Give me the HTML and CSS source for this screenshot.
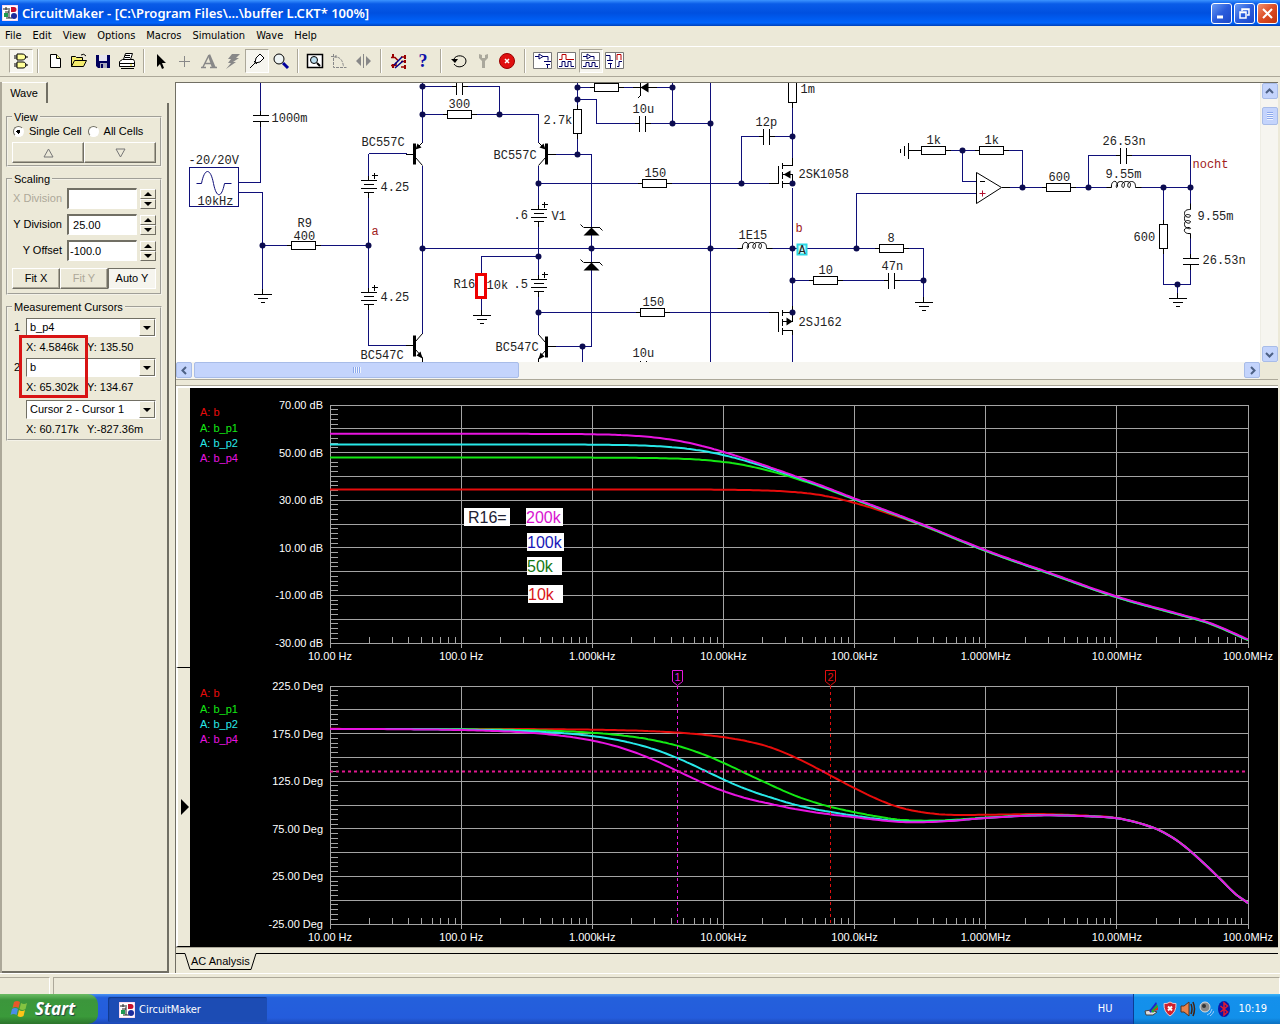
FILE: index.html
```
<!DOCTYPE html>
<html lang="en">
<head>
    <meta charset="utf-8">
    <meta name="viewport" content="width=device-width, initial-scale=1">
    <title>CircuitMaker</title>
    <link rel="stylesheet" href="styles.css">
</head>
<body>
    <!-- shared symbols -->
    <svg class="defs" width="0" height="0" aria-hidden="true">
        <defs>
            <symbol id="app-logo" viewBox="0 0 16 16">
                <rect width="16" height="16" fill="#fff" stroke="#f6b8e0"/>
                <path d="M1 4h7M4 2v3M7 5v8M4 13h6M3 7h4" stroke="#222" fill="none"/>
                <path d="M9 2h3a2.500 2.500 0 0 1 0 5H9z" fill="#c8102e"/>
                <path d="M2 8h4v4H2z" fill="#1d9a52"/>
                <circle cx="12" cy="11" r="3" fill="#1c2c9c"/>
            </symbol>
            <g id="res-h">
                <path class="part" d="M-17 0H17"/>
                <path class="part body" d="M-12-4H12V4H-12Z"/>
            </g>
            <g id="res-v">
                <path class="part" d="M0-17V17"/>
                <path class="part body" d="M-4-12H4V12H-4Z"/>
            </g>
            <g id="cap-h">
                <path class="part" d="M-8 0H8"/>
                <rect x="-3" y="-2" width="6" height="4" fill="#fff"/>
                <path class="part" d="M-3-8V8M3-8V8"/>
            </g>
            <g id="cap-v">
                <path class="part" d="M0-8V8"/>
                <rect x="-2" y="-3" width="4" height="6" fill="#fff"/>
                <path class="part" d="M-8-3H8M-8 3H8"/>
            </g>
            <g id="gnd">
                <path class="part" d="M0-6V0M-9 0H9M-5 4H5M-2 8H2"/>
            </g>
            <g id="bat">
                <rect x="-2" y="0" width="4" height="12" fill="#fff"/>
                <path class="part" d="M0-5V0M-8 0H8M-5 4H5M-8 8H8M-5 12H5M0 12V17M3-5H9M6-8V-2"/>
            </g>
            <g id="coil-h">
                <path class="thin" d="M-17 0H-12C-13-8-5-8-6-1C-8 3-8-6-3-6C1-6 2-3 0 0C-3 0-2-6 3-6C7-6 8-3 6 0C3 0 4-6 8-6C12-6 12-2 12 0H18"/>
            </g>
            <g id="zener">
                <path class="part" d="M-8 0H8"/>
                <path class="thin" d="M-11-3L-8 0M8 0L11 3"/>
                <path d="M0 0L-8 8H8Z" fill="#000"/>
            </g>
            <g id="pnp">
                <path class="part" d="M-1 11H-9"/>
                <path class="bar" d="M0 0V21"/>
                <path class="thin" d="M1 6L8-1M1 14L8 22"/>
                <path d="M1 6L3 0L7 4Z" fill="#000"/>
            </g>
            <g id="npn">
                <path class="part" d="M-1 10H-9"/>
                <path class="bar" d="M0 0V21"/>
                <path class="thin" d="M1 6L8-2M1 14L8 22V28"/>
                <path d="M8 23L2 20L6 16Z" fill="#000"/>
            </g>
        </defs>
    </svg>

    <header class="titlebar">
        <svg class="logo" width="16" height="16"><use href="#app-logo"/></svg>
        <h1 class="title">CircuitMaker - [C:\Program Files\...\buffer L.CKT* 100%]</h1>
        <div class="window-buttons">
            <button class="win-btn" aria-label="Minimize"><svg width="19" height="19"><path d="M5 13h6" stroke="#fff" stroke-width="3"/></svg></button>
            <button class="win-btn" aria-label="Restore"><svg width="19" height="19"><path d="M7 7V5h7v6h-2M7 5.500h7M5 8h6v6H5zM5 8.500h6" fill="none" stroke="#fff" stroke-width="1.500"/></svg></button>
            <button class="win-btn close" aria-label="Close"><svg width="19" height="19"><path d="M5 5l9 9M14 5l-9 9" stroke="#fff" stroke-width="2"/></svg></button>
        </div>
    </header>

    <nav class="menubar">
        <button class="menu">File</button>
        <button class="menu">Edit</button>
        <button class="menu">View</button>
        <button class="menu">Options</button>
        <button class="menu">Macros</button>
        <button class="menu">Simulation</button>
        <button class="menu">Wave</button>
        <button class="menu">Help</button>
    </nav>

    <div class="toolbar">
        <button class="tool pressed" aria-label="Parts"><svg width="18" height="18"><path d="M5 2h5c5 0 5 6 0 6H5zM2 4h3M2 6h3M13 5h3M5 10h6c4 0 4 6 0 6H5zM2 12h3M2 14h3M13 13h3" fill="#ff9" stroke="#000"/></svg></button>
        <span class="sep"></span>
        <button class="tool" aria-label="New"><svg width="18" height="18"><path d="M4.500 2.500h6l4 4v9h-10z" fill="#fff" stroke="#000"/><path d="M10.500 2.500v4h4" fill="#ff9" stroke="#000"/></svg></button>
        <button class="tool" aria-label="Open"><svg width="18" height="18"><path d="M1.500 14.500v-10h4l1 1h6v3M1.500 14.500l3-6h12l-3 6z" fill="#f4ec6c" stroke="#000"/><path d="M11 3q3-2 5 1" fill="none" stroke="#000"/></svg></button>
        <button class="tool" aria-label="Save"><svg width="18" height="18"><path d="M2 3h14v13H4l-2-2z" fill="#00005c"/><path d="M5 3h8v6H5z" fill="#e8e6f0"/><path d="M6 11h7v5H6z" fill="#aab"/><path d="M7 12h2v4H7z" fill="#00005c"/></svg></button>
        <button class="tool" aria-label="Print"><svg width="18" height="18"><path d="M5.500 7.500l2-6h7l-2 6M1.500 9.500l3-2h11l1 2v5h-15zM1.500 11.500h15M3 16.500h13M7 3.500h5M7 5.500h5" fill="#fff" stroke="#000"/><path d="M12 13h2" stroke="#dc0"/></svg></button>
        <span class="sep"></span>
        <button class="tool" aria-label="Arrow"><svg width="18" height="18"><path d="M5 2v13l3-3 2 5 2-1-2-5h4z"/></svg></button>
        <button class="tool" aria-label="Wire"><svg width="18" height="18"><path d="M8.500 4v11M3 9.500h11" stroke="#888"/></svg></button>
        <button class="tool" aria-label="Text"><svg width="18" height="18"><path d="M1 15.500h5M10 15.500h7M3 15L9 3M5 11.500h7" fill="none" stroke="#888" stroke-width="1.500"/><path d="M8 4l4 12h4L10 2z" fill="#888"/></svg></button>
        <button class="tool" aria-label="Delete"><svg width="18" height="18"><path d="M8 2h8l-4 4h3L9 10h3L2 17l5-6H4l3-4H4z" fill="#888"/></svg></button>
        <button class="tool pressed" aria-label="Probe"><svg width="18" height="18"><path d="M2 16l5-5M7 11l1-5 4-4 4 4-4 4-5 1M6 9l3 3" fill="#fff" stroke="#000"/></svg></button>
        <button class="tool" aria-label="Zoom"><svg width="18" height="18"><circle cx="7" cy="7" r="5" fill="#eef4f4" stroke="#000"/><path d="M11 11l5 5" stroke="#00009c" stroke-width="3"/></svg></button>
        <span class="sep"></span>
        <button class="tool" aria-label="Fit circuit"><svg width="18" height="18"><path d="M1.500 2.500h15v13h-15z" fill="#fff" stroke="#000" stroke-width="1.500"/><circle cx="8" cy="8" r="3.500" fill="#bde" stroke="#000"/><path d="M11 11l3 3" stroke="#000" stroke-width="2"/></svg></button>
        <button class="tool" aria-label="Rotate"><svg width="18" height="18"><path d="M3.500 2v13.500h13M3.500 5q9-1 10 10M1 4.500h5M6 3v4" fill="none" stroke="#888" stroke-dasharray="3 1"/></svg></button>
        <button class="tool" aria-label="Mirror"><svg width="18" height="18"><path d="M7 4v10L2 9zM12 4v10l5-5z" fill="#888"/><path d="M9.500 2v14" stroke="#888"/></svg></button>
        <span class="sep wide"></span>
        <button class="tool" aria-label="Mixed mode"><svg width="18" height="18"><path d="M1 5.500h4l3 3M1 13.500h5v-3M11 5h5M11 9.500h5M11 15h5" fill="none" stroke="#900" stroke-width="1.500"/><path d="M3 2v4M3 12v4M15 3v4M15 8v3M15 13v4" stroke="#900" stroke-width="2"/><path d="M4 13l8-8M5 16l8-7" stroke="#008" stroke-width="1.500"/></svg></button>
        <button class="tool help" aria-label="Help">?</button>
        <span class="sep wide"></span>
        <button class="tool" aria-label="Reset"><svg width="18" height="18"><path d="M4 7c2-5 12-4 12 2s-9 8-12 3" fill="none" stroke="#000"/><path d="M1 7h7l-3 4z"/></svg></button>
        <button class="tool" aria-label="Setup"><svg width="18" height="18"><path d="M5 2v4l3 3v7h3V9l3-3V2l-3 1v3H8V3z" fill="#aaa89c"/></svg></button>
        <button class="tool" aria-label="Stop"><svg width="18" height="18"><circle cx="9" cy="9" r="7.500" fill="#e01010" stroke="#900"/><path d="M7 7l4 4M11 7l-4 4" stroke="#fff" stroke-width="1.500"/></svg></button>
        <span class="sep wide"></span>
        <button class="tool" aria-label="Schematic view"><svg width="20" height="18"><path d="M.5.5h18v16H.5z" fill="#fff" stroke="#777"/><path d="M2 4.500h4M6 2v5l4-2.500zM10 4.500h5v4M11 9.500h7M13 12.500h4M14.500 12v4" fill="none" stroke="#006"/></svg></button>
        <button class="tool" aria-label="Wave view"><svg width="20" height="18"><path d="M.5.5h18v16H.5z" fill="#fff" stroke="#777"/><path d="M2 7.500h3v-5h4v5h8" fill="none" stroke="#b00"/><path d="M2 14.500h3v-5h3v5h3v-5h3v5h3" fill="none" stroke="#006"/></svg></button>
        <button class="tool pressed" aria-label="Split horizontally"><svg width="20" height="18"><path d="M.5.5h18v16H.5zM1 8.500h17" fill="#fff" stroke="#777"/><path d="M2 4.500h4M6 2v5l4-2.500zM10 4.500h3v3M2 14.500h3v-4h3v4h3v-4h3v4h3" fill="none" stroke="#006"/></svg></button>
        <button class="tool" aria-label="Split vertically"><svg width="20" height="18"><path d="M.5.5h18v16H.5zM10.500 1v16" fill="#fff" stroke="#777"/><path d="M1 3.500h4v5M2 8.500h6M3 11.500h4M5.500 12v4" fill="none" stroke="#006"/><path d="M12 8V2.500h4V8" fill="none" stroke="#b00"/><path d="M12 14.500h2V9.500h3" fill="none" stroke="#006"/></svg></button>
    </div>

    <main class="workspace">
        <aside class="sidebar">
            <div class="tabs"><button class="tab">Wave</button></div>
            <div class="panel">
                <fieldset class="group view-group">
                    <legend>View</legend>
                    <div class="radios">
                        <label><input type="radio" name="cells" checked>Single Cell</label>
                        <label><input type="radio" name="cells">All Cells</label>
                    </div>
                    <div class="split">
                        <button class="push" aria-label="Up"><svg width="11" height="10"><path d="M5.500 1L10 9H1z" fill="none" stroke="#777"/></svg></button>
                        <button class="push" aria-label="Down"><svg width="11" height="10"><path d="M5.500 9L10 1H1z" fill="none" stroke="#777"/></svg></button>
                    </div>
                </fieldset>

                <fieldset class="group scaling-group">
                    <legend>Scaling</legend>
                    <div class="field">
                        <label class="disabled" for="xdiv">X Division</label>
                        <input id="xdiv" type="text" value="">
                        <span class="spin"><button aria-label="X up"><i class="up"></i></button><button aria-label="X down"><i class="down"></i></button></span>
                    </div>
                    <div class="field">
                        <label for="ydiv">Y Division</label>
                        <input id="ydiv" type="text" value=" 25.00">
                        <span class="spin"><button aria-label="Y up"><i class="up"></i></button><button aria-label="Y down"><i class="down"></i></button></span>
                    </div>
                    <div class="field">
                        <label for="yoff">Y Offset</label>
                        <input id="yoff" type="text" value="-100.0">
                        <span class="spin"><button aria-label="Offset up"><i class="up"></i></button><button aria-label="Offset down"><i class="down"></i></button></span>
                    </div>
                    <div class="split fit">
                        <button class="push">Fit X</button>
                        <button class="push" disabled>Fit Y</button>
                        <button class="push on">Auto Y</button>
                    </div>
                </fieldset>

                <fieldset class="group cursor-group">
                    <legend>Measurement Cursors</legend>
                    <div class="cursor">
                        <label for="cur1">1</label>
                        <span class="combo"><select id="cur1"><option>b_p4</option></select><span class="drop"><i class="down"></i></span></span>
                    </div>
                    <div class="reading"><span>X: 4.5846k</span><span>Y: 135.50</span></div>
                    <div class="cursor">
                        <label for="cur2">2</label>
                        <span class="combo"><select id="cur2"><option>b</option></select><span class="drop"><i class="down"></i></span></span>
                    </div>
                    <div class="reading"><span>X: 65.302k</span><span>Y: 134.67</span></div>
                    <div class="cursor diff">
                        <span class="combo"><select aria-label="Difference"><option>Cursor 2 - Cursor 1</option></select><span class="drop"><i class="down"></i></span></span>
                    </div>
                    <div class="reading"><span>X: 60.717k</span><span>Y:-827.36m</span></div>
                    <span class="mark"></span>
                </fieldset>
            </div>
        </aside>

        <section class="content">
            <div class="schematic">
                <div class="canvas">
                    <svg class="circuit" width="1084" height="279" viewBox="175.5 82.5 1084 279">
                        <g class="wire">
                            <path d="M260 82V182H238M238 192H262V294M262 245H368M368 153V345M368 153H406M368 345H406"/>
                            <path d="M422 82V142M422 165V333M422 86H499V114M422 114H538V142M422 248H792"/>
                            <path d="M577 82V154M577 87H672M672 82V123M577 99H596V123H710M710 82V362"/>
                            <path d="M554 154H591V346H554M582 346V362M538 165V334M538 183H770M538 256H481V315M538 312H770"/>
                            <path d="M792 102V157M792 136H741V183M792 187V305M792 334V362M792 248H923V302M792 280H923M856 248V193H976"/>
                            <path d="M908 150H1022V187M962 150V181H976M1001 187H1190M1088 187V155H1190V284H1163V187M1177 284V298"/>
                        </g>
                        <!-- signal source -->
                        <rect x="189" y="167" width="49" height="39" fill="#fff" stroke="#10107a"/>
                        <path d="M196 183H201C204 167 210 167 213 183C216 198 221 198 224 183H231" fill="none" stroke="#10107a"/>

                        <use href="#cap-v" x="260" y="118"/>
                        <use href="#res-h" x="303" y="245"/>
                        <use href="#gnd" x="262" y="294"/>
                        <use href="#bat" x="368" y="180"/>
                        <use href="#bat" x="368" y="292"/>
                        <use href="#pnp" x="414" y="143"/>
                        <use href="#npn" x="414" y="335"/>
                        <use href="#cap-h" x="459" y="86"/>
                        <use href="#res-h" x="459" y="114"/>
                        <use href="#pnp" transform="translate(546 143) scale(-1 1)"/>
                        <use href="#npn" transform="translate(546 336) scale(-1 1)"/>
                        <use href="#res-v" x="577" y="121"/>
                        <use href="#res-h" x="606" y="87"/>
                        <path d="M640 87L648 82V92Z" fill="#000"/>
                        <path class="part" d="M640 82V95L637 98M632 87H656"/>
                        <use href="#cap-h" x="642" y="123"/>
                        <use href="#cap-h" x="643" y="368"/>
                        <use href="#res-h" x="654" y="183"/>
                        <use href="#res-h" x="652" y="312"/>
                        <use href="#bat" x="538" y="209"/>
                        <use href="#bat" x="538" y="279"/>
                        <use href="#zener" x="591" y="227"/>
                        <use href="#zener" x="591" y="262"/>
                        <rect x="476" y="274" width="9" height="23" fill="#fff" stroke="#e00" stroke-width="3"/>
                        <use href="#gnd" x="481" y="315"/>
                        <use href="#res-v" x="792" y="90"/>
                        <use href="#cap-h" x="766" y="136"/>
                        <rect x="739" y="246" width="30" height="4" fill="#fff"/>
                        <use href="#coil-h" x="754" y="248"/>
                        <path class="part" d="M768 183H778V165M782 162V168M782 171V178M782 180V187M792 157V165H782M782 174H792V183H782"/>
                        <path d="M783 174L790 170V178Z"/>
                        <path class="part" d="M768 312H778V331M782 309V315M782 318V325M782 327V334M782 312H792M792 305V321H782M782 330H792V334"/>
                        <path d="M792 321L786 317V325Z"/>
                        <use href="#res-h" x="891" y="248"/>
                        <use href="#res-h" x="825" y="280"/>
                        <use href="#cap-h" x="891" y="280"/>
                        <use href="#gnd" x="923" y="302"/>
                        <path class="part" d="M908 142V158M904 145V155M900 148V152M908 150H916"/>
                        <use href="#res-h" x="933" y="150"/>
                        <use href="#res-h" x="991" y="150"/>
                        <path class="thin body" d="M976 172V203L1001 187Z"/>
                        <path class="part" d="M979 181H984M1001 187H1009"/>
                        <path d="M979 193H985M982 190V196" stroke="#b01030"/>
                        <use href="#res-h" x="1058" y="187"/>
                        <use href="#cap-h" x="1123" y="155"/>
                        <rect x="1108" y="185" width="30" height="4" fill="#fff"/>
                        <use href="#coil-h" x="1123" y="187"/>
                        <use href="#res-v" x="1163" y="236"/>
                        <rect x="1188" y="207" width="4" height="28" fill="#fff"/>
                        <use href="#coil-h" transform="translate(1190 221) rotate(-90)"/>
                        <use href="#cap-v" x="1190" y="261"/>
                        <use href="#gnd" x="1177" y="298"/>
                        <rect x="797" y="244" width="9" height="10" fill="#cff" stroke="#2cd8e4" stroke-width="2"/>

                        <g class="dots">
                            <circle cx="262" cy="245" r="3"/><circle cx="368" cy="245" r="3"/><circle cx="422" cy="86" r="3"/><circle cx="422" cy="114" r="3"/>
                            <circle cx="422" cy="248" r="3"/><circle cx="499" cy="114" r="3"/><circle cx="577" cy="87" r="3"/><circle cx="577" cy="99" r="3"/>
                            <circle cx="577" cy="154" r="3"/><circle cx="672" cy="87" r="3"/><circle cx="672" cy="123" r="3"/><circle cx="710" cy="123" r="3"/>
                            <circle cx="710" cy="248" r="3"/><circle cx="591" cy="248" r="3"/><circle cx="582" cy="346" r="3"/><circle cx="538" cy="183" r="3"/>
                            <circle cx="538" cy="256" r="3"/><circle cx="538" cy="312" r="3"/><circle cx="792" cy="136" r="3"/><circle cx="741" cy="183" r="3"/>
                            <circle cx="792" cy="183" r="3"/><circle cx="792" cy="248" r="3"/><circle cx="792" cy="280" r="3"/><circle cx="792" cy="312" r="3"/>
                            <circle cx="856" cy="248" r="3"/><circle cx="923" cy="280" r="3"/><circle cx="962" cy="150" r="3"/><circle cx="1022" cy="187" r="3"/>
                            <circle cx="1088" cy="187" r="3"/><circle cx="1163" cy="187" r="3"/><circle cx="1190" cy="187" r="3"/><circle cx="1177" cy="284" r="3"/>
                        </g>

                        <g class="labels">
                            <text x="271" y="121">1000m</text>
                            <text x="188" y="163">-20/20V</text>
                            <text x="197" y="204">10kHz</text>
                            <text x="297" y="226">R9</text>
                            <text x="293" y="239">400</text>
                            <text x="380" y="190">4.25</text>
                            <text x="380" y="300">4.25</text>
                            <text x="361" y="145">BC557C</text>
                            <text x="360" y="358">BC547C</text>
                            <text x="448" y="107">300</text>
                            <text x="493" y="158">BC557C</text>
                            <text x="495" y="350">BC547C</text>
                            <text x="543" y="123">2.7k</text>
                            <text x="632" y="112">10u</text>
                            <text x="632" y="356">10u</text>
                            <text x="644" y="176">150</text>
                            <text x="642" y="305">150</text>
                            <text x="513" y="218">.6</text>
                            <text x="551" y="219">V1</text>
                            <text x="513" y="287">.5</text>
                            <text x="453" y="287">R16</text>
                            <text x="486" y="288">10k</text>
                            <text x="800" y="92">1m</text>
                            <text x="755" y="125">12p</text>
                            <text x="798" y="177">2SK1058</text>
                            <text x="798" y="325">2SJ162</text>
                            <text x="738" y="238">1E15</text>
                            <text x="798" y="253">A</text>
                            <text x="887" y="241">8</text>
                            <text x="818" y="273">10</text>
                            <text x="881" y="269">47n</text>
                            <text x="926" y="143">1k</text>
                            <text x="984" y="143">1k</text>
                            <text x="1048" y="180">600</text>
                            <text x="1102" y="144">26.53n</text>
                            <text x="1105" y="177">9.55m</text>
                            <text x="1133" y="240">600</text>
                            <text x="1197" y="219">9.55m</text>
                            <text x="1202" y="263">26.53n</text>
                            <text class="net" x="371" y="234">a</text>
                            <text class="net" x="795" y="231">b</text>
                            <text class="net" x="1192" y="167">nocht</text>
                        </g>
                    </svg>
                </div>
                <div class="vscroll">
                    <button class="scroll-btn" aria-label="Scroll up"><svg width="9" height="9"><path d="M1 6l3.500-3.500L8 6" fill="none" stroke="#4d6185" stroke-width="2"/></svg></button>
                    <span class="vthumb"><i></i></span>
                    <button class="scroll-btn" aria-label="Scroll down"><svg width="9" height="9"><path d="M1 3l3.500 3.500L8 3" fill="none" stroke="#4d6185" stroke-width="2"/></svg></button>
                </div>
                <div class="hscroll">
                    <button class="scroll-btn" aria-label="Scroll left"><svg width="9" height="9"><path d="M6 1L2.500 4.500 6 8" fill="none" stroke="#4d6185" stroke-width="2"/></svg></button>
                    <span class="hthumb"><i></i></span>
                    <button class="scroll-btn" aria-label="Scroll right"><svg width="9" height="9"><path d="M3 1l3.500 3.500L3 8" fill="none" stroke="#4d6185" stroke-width="2"/></svg></button>
                </div>
            </div>

            <div class="plots">
                <div class="plot-row">
                    <div class="strip"></div>
                    <svg class="plot" id="gain"></svg>
                </div>
                <div class="plot-row">
                    <div class="strip"><svg width="8" height="16"><path d="M0 0l8 8-8 8z"/></svg></div>
                    <svg class="plot" id="phase"></svg>
                </div>
            </div>

            <div class="sheet-tabs">
                <span class="sheet-edge"></span>
                <svg width="7" height="17"><path d="M0 .5h1L6 16.500h1" fill="none" stroke="#000"/></svg>
                <button class="sheet-tab">AC Analysis</button>
                <svg width="7" height="17"><path d="M0 16.500h1L6 .5h1" fill="none" stroke="#000"/></svg>
                <span class="sheet-edge grow"></span>
            </div>
        </section>
    </main>

    <div class="statusbar"><span class="status-cell"></span><span class="status-cell rest"></span></div>

    <footer class="taskbar">
        <button class="start">
            <svg width="20" height="20"><path d="M4 3q3-2 6 0L8.500 9q-3-2-6 0z" fill="#e8582a"/><path d="M11 4q3 2 6 0l-1.500 6q-3 2-6 0z" fill="#84c341"/><path d="M2 10q3-2 6 0l-1.500 6q-3-2-6 0z" fill="#4a8ee8"/><path d="M9 11q3 2 6 0l-1.500 6q-3 2-6 0z" fill="#fcc419"/></svg>
            Start
        </button>
        <button class="task"><svg width="16" height="16"><use href="#app-logo"/></svg>CircuitMaker</button>
        <span class="lang">HU</span>
        <div class="tray">
            <svg width="16" height="16"><path d="M1 10l6-1 6 2-4 3H2z" fill="#ddd" stroke="#444"/><path d="M5 10L12 1l1 2-6 9z" fill="#22c"/><path d="M7 10l6-7 1 3-5 6z" fill="#2a3"/><path d="M9 10l5-4v3z" fill="#e22"/></svg>
            <svg width="16" height="16"><path d="M8 1q3 2 6 1.500Q14.500 11 8 15 1.500 11 2 2.500 5 3 8 1z" fill="#d0202c" stroke="#f0c8cc"/><path d="M6 5.500l4 4M10 5.500l-4 4" stroke="#fff" stroke-width="2"/></svg>
            <svg width="16" height="16"><path d="M1 5h3l5-4v14l-5-4H1z" fill="#e8824a" stroke="#532"/><path d="M11 3q2 5 0 10M13 1q3 7 0 14" fill="none" stroke="#421" stroke-width="1.500"/></svg>
            <svg width="16" height="16"><circle cx="7" cy="6" r="5" fill="#888" stroke="#ddd"/><circle cx="6" cy="5" r="2" fill="#333"/><path d="M9 14q4-1 5-6M12 15q3-2 4-5" fill="none" stroke="#9cf"/></svg>
            <svg width="16" height="16"><ellipse cx="8" cy="8" rx="6" ry="8" fill="#0a16a8"/><path d="M4.500 5l7 6L8 14V2l3.500 3-7 6" fill="none" stroke="#e01830" stroke-width="1.500"/></svg>
            <time class="clock">10:19</time>
        </div>
    </footer>

    <script src="script.js"></script>
</body>
</html>
```
FILE: styles.css
```
* {
    box-sizing: border-box;
}
body {
    margin: 0;
    height: 100vh;
    display: flex;
    flex-direction: column;
    background: #ece9d8;
    color: #000;
    font: 11px/13px "Liberation Sans", Arial, sans-serif;
    overflow: hidden;
}
button, input, select {
    font: inherit;
    color: inherit;
    margin: 0;
    padding: 0;
    border: 0;
    border-radius: 0;
    background: none;
    appearance: none;
}
svg {
    display: block;
    flex: none;
}
.defs {
    position: absolute;
}

/* title bar */
.titlebar {
    display: flex;
    align-items: center;
    gap: 4px;
    height: 26px;
    padding: 0 2px;
    flex: none;
    background: linear-gradient(#3c94ff, #0a5ce8 15%, #0050e0 50%, #0064fc 88%, #0040b8);
}
.title {
    flex: 1;
    margin: 0;
    color: #fff;
    font: 600 13px/20px "Noto Sans", sans-serif;
    white-space: nowrap;
}
.window-buttons {
    display: flex;
    gap: 2px;
}
.win-btn {
    width: 21px;
    height: 21px;
    border: 1px solid #fff;
    border-radius: 3px;
    background: linear-gradient(135deg, #6a9cf4, #2a5cdc 50%, #1c48c8);
}
.win-btn.close {
    background: linear-gradient(135deg, #f09070, #dc4c24 50%, #c03410);
}

/* menu and tools */
.menubar {
    display: flex;
    gap: 11px;
    height: 20px;
    padding: 0 5px;
    flex: none;
}
.menu {
    font: 11px/18px "DejaVu Sans Condensed", "Noto Sans", sans-serif;
}
.toolbar {
    display: flex;
    align-items: center;
    height: 31px;
    padding: 0 0 2px 9px;
    flex: none;
    border-top: 1px solid #fff;
    border-bottom: 1px solid #aca899;
}
.tool {
    width: 24px;
    height: 24px;
    display: flex;
    align-items: center;
    justify-content: center;
}
.tool.pressed {
    border: 1px solid #aca899;
    border-right-color: #fff;
    border-bottom-color: #fff;
    background: #f6f5ee;
}
.tool.help {
    color: #1010a8;
    font: bold 18px/22px "Liberation Serif", serif;
}
.sep {
    width: 10px;
    height: 24px;
    background: linear-gradient(90deg, #aca899 50%, #fff 50%) center / 2px 100% no-repeat;
}
.sep.wide {
    width: 12px;
}

.workspace {
    flex: 1;
    display: flex;
    min-height: 0;
    padding-top: 5px;
}

/* side panel */
.sidebar {
    width: 169px;
    margin-right: 6px;
    flex: none;
    display: flex;
    flex-direction: column;
    border-left: 2px solid #aca899;
}
.tabs {
    height: 21px;
    display: flex;
}
.tab {
    width: 46px;
    border-top: 1px solid #fff;
    border-right: 2px solid #716f64;
}
.panel {
    flex: 1;
    padding: 8px 5px 0 4px;
    border-right: 2px solid #716f64;
    border-bottom: 2px solid #716f64;
}
.group {
    position: relative;
    min-width: 0;
    margin: 0 0 6px;
    padding: 0 4px;
    border: 2px groove #f4f2e8;
}
.group legend {
    padding: 0 2px;
    line-height: 12px;
}
.view-group {
    height: 56px;
}
.scaling-group {
    height: 122px;
    padding-top: 3px;
}
.cursor-group {
    height: 140px;
    padding-top: 5px;
}
.radios {
    display: flex;
    gap: 6px;
    height: 19px;
    padding-left: 1px;
}
.radios label {
    display: flex;
    align-items: center;
    gap: 5px;
    height: 16px;
    white-space: nowrap;
}
.radios input {
    width: 11px;
    height: 11px;
    border: 1px solid #716f64;
    border-right-color: #fff;
    border-bottom-color: #fff;
    border-radius: 50%;
    background: #fff;
}
.radios input:checked {
    background: radial-gradient(circle, #000 2px, #fff 2px);
}
.split {
    display: flex;
    height: 21px;
}
.push {
    flex: 1;
    display: flex;
    align-items: center;
    justify-content: center;
    white-space: nowrap;
    border: 1px solid #fff;
    border-right-color: #716f64;
    border-bottom-color: #716f64;
    box-shadow: inset -1px -1px #aca899;
}
.push:disabled {
    color: #aca899;
}
.push.on {
    border-color: #716f64 #fff #fff #716f64;
    background: #f6f5ee;
    box-shadow: none;
}
.fit {
    margin-top: 7px;
}
.field {
    display: flex;
    align-items: center;
    height: 21px;
    margin-bottom: 5px;
}
.field label {
    width: 50px;
    text-align: right;
    white-space: nowrap;
}
.field label.disabled {
    color: #aca899;
}
.field input {
    flex: 1;
    min-width: 0;
    height: 21px;
    margin: 0 3px 0 5px;
    padding-left: 1px;
    white-space: pre;
    background: #fff;
    border: 2px solid #716f64;
    border-right: 1px solid #fff;
    border-bottom: 1px solid #fff;
}
.spin {
    width: 16px;
    display: flex;
    flex-direction: column;
}
.spin button, .drop {
    display: flex;
    align-items: center;
    justify-content: center;
    height: 10px;
    background: #ece9d8;
    border: 1px solid #fff;
    border-right-color: #716f64;
    border-bottom-color: #716f64;
}
.up, .down {
    border: 4px solid transparent;
    border-top-width: 0;
    border-bottom-color: #000;
}
.down {
    border-top: 4px solid #000;
    border-bottom: 0;
}
.cursor {
    display: flex;
    height: 19px;
}
.cursor label {
    width: 14px;
    padding-left: 2px;
    line-height: 19px;
}
.cursor.diff {
    padding-left: 14px;
    margin-top: 2px;
}
.combo {
    position: relative;
    flex: 1;
}
.combo select {
    width: 100%;
    height: 19px;
    padding-left: 3px;
    background: #fff;
    border: 1px solid #716f64;
    border-right-color: #fff;
    border-bottom-color: #fff;
}
.drop {
    position: absolute;
    top: 1px;
    right: 1px;
    width: 16px;
    height: 17px;
    pointer-events: none;
}
.reading {
    display: grid;
    grid-template-columns: 61px 1fr;
    height: 21px;
    padding-left: 14px;
    line-height: 21px;
    white-space: nowrap;
}
/* red frame drawn over the two X readings */
.mark {
    position: absolute;
    left: 11px;
    top: 22px;
    width: 69px;
    height: 63px;
    border: 3px solid #d81414;
    pointer-events: none;
}

/* schematic */
.content {
    flex: 1;
    min-width: 0;
    margin-right: 2px;
    display: flex;
    flex-direction: column;
    border-left: 1px solid #716f64;
    border-top: 1px solid #716f64;
}
.schematic {
    display: grid;
    grid-template-columns: 1fr 18px;
    grid-template-rows: 279px 17px;
}
.canvas {
    min-width: 0;
    overflow: hidden;
    background: #fff;
}
.wire, .part {
    fill: none;
    stroke: #10107a;
    shape-rendering: crispEdges;
}
.part, .thin {
    stroke: #000;
}
.thin {
    fill: none;
}
.part.body, .thin.body {
    fill: #fff;
}
.bar {
    stroke: #000;
    stroke-width: 3;
}
.dots {
    fill: #0c0c50;
}
.labels {
    fill: #222;
    font: 12px "Liberation Mono", "Courier New", monospace;
}
.labels .net {
    fill: #a02020;
}
.vscroll, .hscroll {
    display: flex;
    background: #f6f5f0;
}
.vscroll {
    flex-direction: column;
    align-items: center;
    border-left: 1px solid #eeede5;
}
.vscroll .scroll-btn:last-child {
    margin-top: auto;
}
.hscroll .scroll-btn:last-child {
    margin-left: auto;
}
.scroll-btn, .vthumb, .hthumb {
    display: flex;
    align-items: center;
    justify-content: center;
    width: 16px;
    height: 16px;
    border: 1px solid #a8bce8;
    border-radius: 2px;
    background: #c4d4fc;
}
.vthumb {
    height: 18px;
    margin-top: 8px;
}
.vthumb i {
    width: 6px;
    height: 8px;
    background: repeating-linear-gradient(#8ca8ec 0 1px, #eef4fe 1px 2px);
}
.hthumb {
    width: 30%;
    margin-left: 2px;
}
.hthumb i {
    width: 8px;
    height: 6px;
    background: repeating-linear-gradient(90deg, #8ca8ec 0 1px, #eef4fe 1px 2px);
}

/* plots */
.plots {
    flex: 1;
    min-height: 0;
    padding-top: 8px;
    display: flex;
    flex-direction: column;
    border-top: 1px solid #aca899;
    border-bottom: 1px solid #aca899;
    background: linear-gradient(#ece9d8 5px, #aca899 5px 6px, #fff 6px 8px, #ece9d8 8px);
}
.plot-row {
    flex: 1;
    min-height: 0;
    display: flex;
}
.strip {
    width: 14px;
    display: flex;
    align-items: center;
    padding-left: 3px;
    border-left: 2px solid #fff;
    border-bottom: 1px solid #000;
}
.plot {
    flex: 1;
    min-width: 0;
    height: 100%;
    background: #000;
    fill: #fff;
    overflow: hidden;
}
.grid {
    fill: none;
    stroke: #a4a4a4;
    shape-rendering: crispEdges;
}
.curve {
    fill: none;
    stroke-width: 2;
}
.note {
    font-size: 16px;
}

.sheet-tabs {
    display: flex;
    height: 25px;
    padding-top: 5px;
}
.sheet-edge {
    width: 8px;
    border-top: 1px solid #000;
}
.sheet-edge.grow {
    flex: 1;
}
.sheet-tab {
    height: 17px;
    border-bottom: 1px solid #000;
    white-space: nowrap;
}

.statusbar {
    display: flex;
    gap: 3px;
    height: 21px;
    padding-top: 3px;
    flex: none;
    border-top: 1px solid #fff;
}
.status-cell {
    width: 50px;
    border-top: 1px solid #aca899;
    border-right: 1px solid #fff;
}
.status-cell.rest {
    flex: 1;
    border-left: 1px solid #aca899;
}

/* taskbar */
.taskbar {
    display: flex;
    height: 30px;
    flex: none;
    color: #fff;
    background: linear-gradient(#4a94f4, #2460dc 12%, #245cdc 80%, #1c48b4);
    font: 11px/30px "DejaVu Sans Condensed", "Noto Sans", sans-serif;
}
.start {
    display: flex;
    align-items: center;
    gap: 5px;
    width: 98px;
    padding-left: 10px;
    border-radius: 0 10px 10px 0;
    background: linear-gradient(#6cbc64, #3c963c 20%, #3a9a3a 75%, #2c742c);
    font: italic bold 17px/28px "Open Sans", sans-serif;
    text-shadow: 1px 1px 1px #244;
}
.task {
    display: flex;
    align-items: center;
    gap: 4px;
    width: 159px;
    height: 25px;
    margin: 3px 0 0 10px;
    padding-left: 11px;
    border-radius: 2px;
    background: #1c4cb4;
    box-shadow: inset 1px 1px 1px #123a8c;
}
.lang {
    margin-left: auto;
    padding-right: 21px;
}
.tray {
    display: flex;
    align-items: center;
    gap: 2px;
    padding: 0 13px 0 10px;
    border-left: 1px solid #0c3c94;
    background: linear-gradient(#3cb4f8, #1490ec 12%, #1290ea 80%, #0c70c0);
}
.clock {
    padding-left: 4px;
}
```
FILE: script.js
```
const NS = 'http://www.w3.org/2000/svg';
const LEFT = 140;
const RIGHT = 30;
const SPAN = 238;

const traces = [
    { name: 'A: b', color: '#e80c0c', gain: 34.5, fc: 65302 },
    { name: 'A: b_p1', color: '#14e814', gain: 47.9, fc: 13900 },
    { name: 'A: b_p2', color: '#28e8e8', gain: 53.4, fc: 7500 },
    { name: 'A: b_p4', color: '#e814e0', gain: 57.9, fc: 4584 }
];

// deviation from the one pole response: [log10(f), value]
const gainFix = [[1, 0], [4.7, 0], [5, -0.4], [5.5, -0.9], [6, -2.1], [6.5, -1.9], [7, -1.6], [7.48, 0.6], [7.71, 1.5], [8, 0.4]];
const phaseFix = [[1, 0], [4.3, 0], [4.58, -2], [5, -5.5], [5.35, -9], [5.65, -8], [6, -4], [6.41, -1], [6.8, -2], [7, -4],
    [7.18, -9.5], [7.33, -17], [7.48, -29.5], [7.63, -47], [7.79, -68], [7.9, -83], [8, -93]];

const gainPlot = {
    id: 'gain', top: 17, max: 70, min: -30, step: 10, tick: 2, legend: 28,
    unit: ' dB', fix: gainFix,
    value: (t, f) => t.gain - 10 * Math.log10(1 + (f / t.fc) ** 2)
};
const phasePlot = {
    id: 'phase', top: 18, max: 225, min: -25, step: 25, tick: 5, legend: 29,
    unit: ' Deg', fix: phaseFix,
    value: (t, f) => 180 - Math.atan(f / t.fc) * 180 / Math.PI
};
const freqs = ['10.00 Hz', '100.0 Hz', '1.000kHz', '10.00kHz', '100.0kHz', '1.000MHz', '10.00MHz', '100.0MHz'];

function add(parent, tag, attrs, text) {
    const el = document.createElementNS(NS, tag);
    for (const key in attrs) el.setAttribute(key, attrs[key]);
    if (text) el.textContent = text;
    parent.appendChild(el);
    return el;
}

// cubic interpolation through the table
function lookup(table, x) {
    let i = 0;
    while (i < table.length - 2 && x > table[i + 1][0]) i++;
    const slope = k => {
        const a = table[Math.max(k - 1, 0)];
        const b = table[Math.min(k + 1, table.length - 1)];
        return (b[1] - a[1]) / (b[0] - a[0]);
    };
    const h = table[i + 1][0] - table[i][0];
    const t = (x - table[i][0]) / h;
    const m0 = i < 1 ? 0 : slope(i);
    const m1 = i < 1 ? 0 : slope(i + 1);
    return (2 * t ** 3 - 3 * t ** 2 + 1) * table[i][1] + (t ** 3 - 2 * t ** 2 + t) * h * m0 +
        (3 * t ** 2 - 2 * t ** 3) * table[i + 1][1] + (t ** 3 - t ** 2) * h * m1;
}

function drawPlot(p) {
    const svg = document.getElementById(p.id);
    svg.replaceChildren();
    const right = svg.clientWidth - RIGHT;
    const decade = (right - LEFT) / 7;
    const xOf = lg => LEFT + (lg - 1) * decade;
    const yOf = v => p.top + (p.max - v) * SPAN / (p.max - p.min);
    const px = n => Math.floor(n) + 0.5;

    let d = '';
    for (let v = p.max; v >= p.min; v -= p.step) {
        d += `M${LEFT} ${px(yOf(v))}H${right}`;
    }
    for (let v = p.max; v >= p.min; v -= p.tick) {
        d += `M${LEFT} ${px(yOf(v))}h8`;
    }
    for (let k = 0; k <= 7; k++) {
        d += `M${px(xOf(k + 1))} ${p.top}v${SPAN + 5}`;
        for (let n = 2; n < 10 && k < 7; n++) {
            d += `M${px(xOf(k + 1 + Math.log10(n)))} ${p.top + SPAN}v-6`;
        }
        add(svg, 'text', { x: xOf(k + 1), y: p.top + SPAN + 17, 'text-anchor': 'middle' }, freqs[k]);
    }
    add(svg, 'path', { class: 'grid', d });

    for (let v = p.max; v >= p.min; v -= p.step * 2) {
        const label = v >= 100 ? v.toFixed(1) : v.toFixed(2);
        add(svg, 'text', { x: LEFT - 7, y: Math.round(yOf(v)) + 4, 'text-anchor': 'end' }, label + p.unit);
    }

    traces.forEach((t, i) => {
        const points = [];
        for (let x = LEFT; x <= right; x += 3) {
            const lg = 1 + (x - LEFT) / decade;
            const v = p.value(t, 10 ** lg) + lookup(p.fix, lg);
            points.push(`${x} ${yOf(v).toFixed(1)}`);
        }
        add(svg, 'path', { class: 'curve', stroke: t.color, d: 'M' + points.join('L') });
        add(svg, 'text', { x: 10, y: p.legend + i * 15 + (i ? 1 : 0), fill: t.color }, t.name);
    });

    if (p === gainPlot) {
        drawNote(svg, 274, 120, 46, 'R16=', '#223', 4);
        drawNote(svg, 336, 120, 37, '200k', '#d814d0', 0);
        drawNote(svg, 337, 145, 37, '100k', '#1818b8', 0);
        drawNote(svg, 337, 169, 35, '50k', '#147814', 0);
        drawNote(svg, 338, 197, 35, '10k', '#d81420', 0);
    } else {
        const y = px(yOf(135));
        add(svg, 'path', { d: `M${LEFT} ${y}H${right}`, stroke: '#e01890', 'stroke-width': 2, 'stroke-dasharray': '3 3' });
        drawCursor(svg, px(xOf(Math.log10(4500))), '1', '#e818e0', p.top);
        drawCursor(svg, px(xOf(Math.log10(65302))), '2', '#e01010', p.top);
    }
}

function drawNote(svg, x, y, width, text, color, pad) {
    add(svg, 'rect', { x, y, width, height: 18, fill: '#fff' });
    add(svg, 'text', { class: 'note', x: x + pad, y: y + 15, fill: color }, text);
}

function drawCursor(svg, x, name, color, top) {
    add(svg, 'path', { d: `M${x} ${top}v${SPAN}`, fill: 'none', stroke: color, 'stroke-dasharray': '3 3' });
    add(svg, 'path', { d: `M${x - 5} 2.5h10v11l-5 4l-5-4z`, stroke: color, fill: '#000' });
    add(svg, 'text', { x, y: 13, 'text-anchor': 'middle', fill: color }, name);
}

function draw() {
    drawPlot(gainPlot);
    drawPlot(phasePlot);
}

window.addEventListener('resize', draw);
draw();
```
